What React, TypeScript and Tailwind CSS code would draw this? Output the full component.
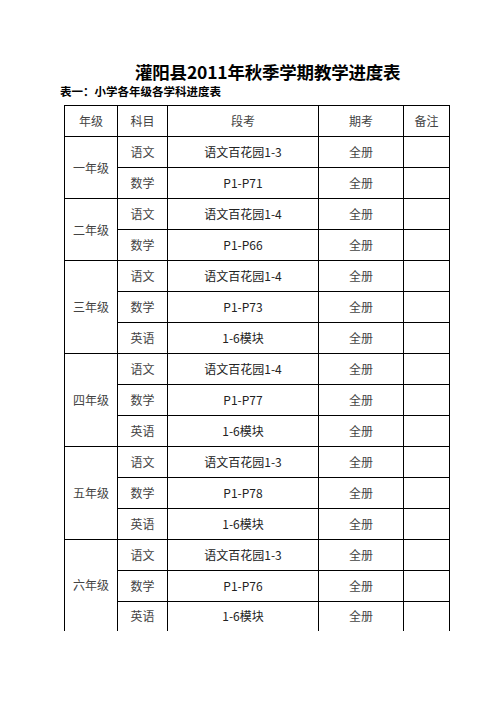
import React from 'react';

const GRADES = [
  { name: '一年级', rows: [['语文', '语文百花园1-3'], ['数学', 'P1-P71']] },
  { name: '二年级', rows: [['语文', '语文百花园1-4'], ['数学', 'P1-P66']] },
  { name: '三年级', rows: [['语文', '语文百花园1-4'], ['数学', 'P1-P73'], ['英语', '1-6模块']] },
  { name: '四年级', rows: [['语文', '语文百花园1-4'], ['数学', 'P1-P77'], ['英语', '1-6模块']] },
  { name: '五年级', rows: [['语文', '语文百花园1-3'], ['数学', 'P1-P78'], ['英语', '1-6模块']] },
  { name: '六年级', rows: [['语文', '语文百花园1-3'], ['数学', 'P1-P76'], ['英语', '1-6模块']] },
];

const cell = 'border border-black text-center align-middle p-0 font-normal';

export default function App() {
  return (
    <div className="w-[496px] h-[702px] bg-white overflow-hidden text-[#444]" style={{ fontFamily: '"Noto Sans CJK SC", sans-serif' }}>
      <h1 className="pt-[60px] pl-[135px] text-[17.5px] leading-[24px] font-bold text-black tracking-[-0.2px]">
        灌阳县2011年秋季学期教学进度表
      </h1>
      <p className="pl-[60px] text-[11.5px] leading-[16px] font-bold text-black mt-[-1px]">
        表一：小学各年级各学科进度表
      </p>
      <table className="ml-[64px] mt-[6px] border-collapse table-fixed text-[12px] leading-none">
        <colgroup>
          <col className="w-[53px]" />
          <col className="w-[50px]" />
          <col className="w-[151px]" />
          <col className="w-[85px]" />
          <col className="w-[46px]" />
        </colgroup>
        <thead>
          <tr className="h-[31px]">
            <th className={cell}>年级</th>
            <th className={cell}>科目</th>
            <th className={cell}>段考</th>
            <th className={cell}>期考</th>
            <th className={cell}>备注</th>
          </tr>
        </thead>
        <tbody>
          {GRADES.map((g, gi) =>
            g.rows.map((r, ri) => {
              const last = gi === GRADES.length - 1 && ri === g.rows.length - 1;
              const edge = last ? ' border-b-0' : '';
              return (
                <tr key={g.name + ri} className={last ? 'h-[29px]' : 'h-[31px]'}>
                  {ri === 0 && (
                    <td rowSpan={g.rows.length} className={cell + (gi === GRADES.length - 1 ? ' border-b-0' : '')}>
                      {g.name}
                    </td>
                  )}
                  <td className={cell + edge}>{r[0]}</td>
                  <td className={cell + edge + ' text-[#222]'}>{r[1]}</td>
                  <td className={cell + edge}>全册</td>
                  <td className={cell + edge}></td>
                </tr>
              );
            })
          )}
        </tbody>
      </table>
    </div>
  );
}
